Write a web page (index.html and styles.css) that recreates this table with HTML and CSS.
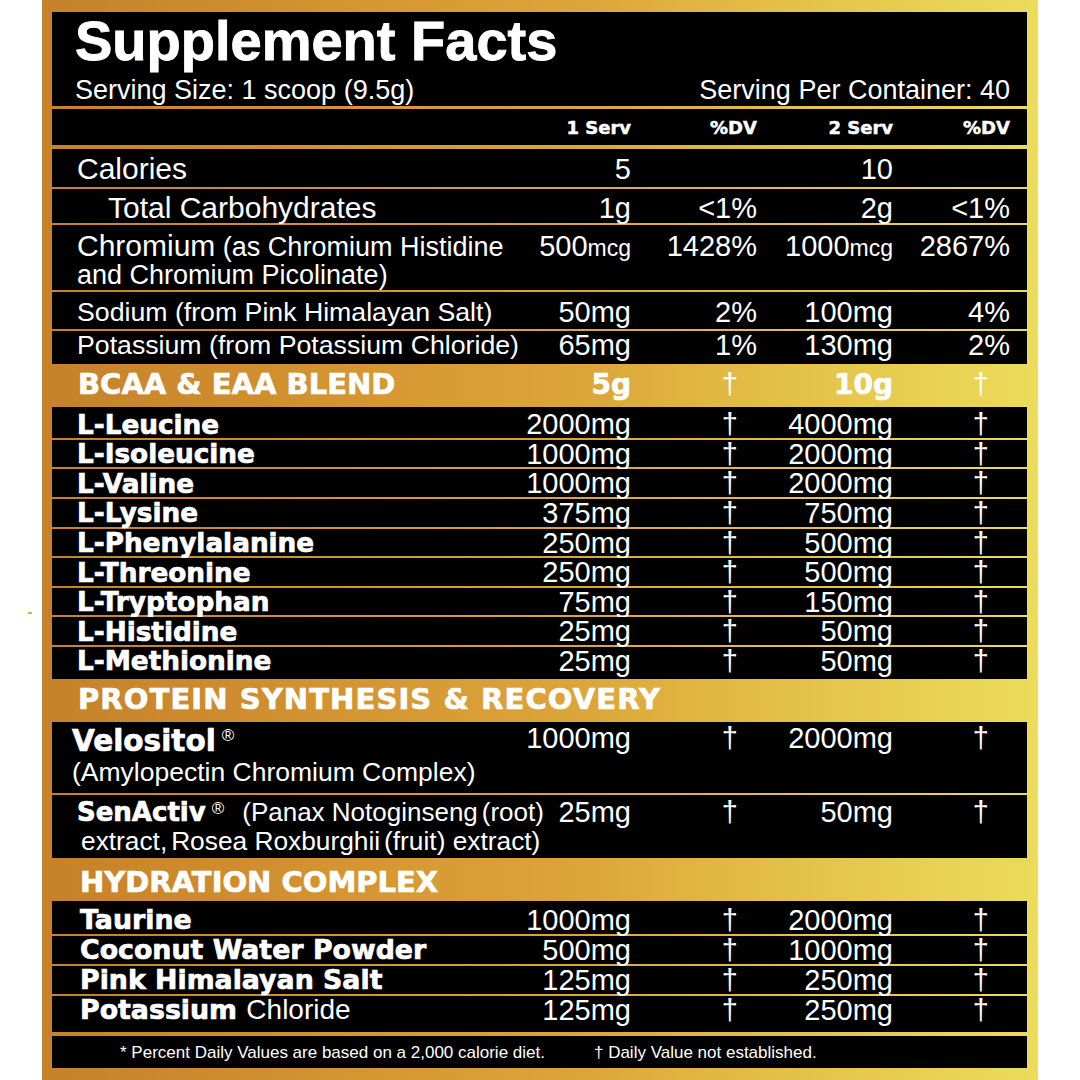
FILE: index.html
```html
<!DOCTYPE html>
<html lang="en">
<head>
<meta charset="utf-8">
<title>Supplement Facts</title>
<link rel="stylesheet" href="styles.css">
</head>
<body>
<span class="speck"></span>
<div class="frame">
  <div class="panel">
    <header class="blk head">
      <h1 class="title">Supplement Facts</h1>
      <div class="serving"><span>Serving Size: 1 scoop (9.5g)</span><span>Serving Per Container: 40</span></div>
    </header>

    <div class="blk row colhead">
      <span></span><span class="v">1 Serv</span><span class="v">%DV</span><span class="v">2 Serv</span><span class="v">%DV</span>
    </div>

    <div class="blk row r-cal">
      <span class="lbl big">Calories</span><span class="v">5</span><span class="v"></span><span class="v">10</span><span class="v"></span>
    </div>

    <div class="blk row r-carb">
      <span class="lbl big indent">Total Carbohydrates</span><span class="v">1g</span><span class="v">&lt;1%</span><span class="v">2g</span><span class="v">&lt;1%</span>
    </div>

    <div class="blk row r-chrom">
      <span class="lbl two"><span class="big">Chromium</span> (as Chromium Histidine<br>and Chromium Picolinate)</span>
      <span class="v">500<small>mcg</small></span><span class="v">1428%</span><span class="v">1000<small>mcg</small></span><span class="v">2867%</span>
    </div>

    <div class="blk row r-sod">
      <span class="lbl">Sodium (from Pink Himalayan Salt)</span><span class="v">50mg</span><span class="v">2%</span><span class="v">100mg</span><span class="v">4%</span>
    </div>

    <div class="blk row r-pot">
      <span class="lbl">Potassium (from Potassium Chloride)</span><span class="v">65mg</span><span class="v">1%</span><span class="v">130mg</span><span class="v">2%</span>
    </div>

    <div class="row sec s-bcaa">
      <span class="sec-title">BCAA &amp; EAA BLEND</span><span class="v heavy">5g</span><span class="v dg">†</span><span class="v heavy">10g</span><span class="v dg">†</span>
    </div>

    <div class="group amino">
      <div class="blk row arow"><span class="alb">L-Leucine</span><span class="v">2000mg</span><span class="v dg">†</span><span class="v">4000mg</span><span class="v dg">†</span></div>
      <div class="blk row arow"><span class="alb">L-Isoleucine</span><span class="v">1000mg</span><span class="v dg">†</span><span class="v">2000mg</span><span class="v dg">†</span></div>
      <div class="blk row arow"><span class="alb">L-Valine</span><span class="v">1000mg</span><span class="v dg">†</span><span class="v">2000mg</span><span class="v dg">†</span></div>
      <div class="blk row arow"><span class="alb">L-Lysine</span><span class="v">375mg</span><span class="v dg">†</span><span class="v">750mg</span><span class="v dg">†</span></div>
      <div class="blk row arow"><span class="alb">L-Phenylalanine</span><span class="v">250mg</span><span class="v dg">†</span><span class="v">500mg</span><span class="v dg">†</span></div>
      <div class="blk row arow"><span class="alb">L-Threonine</span><span class="v">250mg</span><span class="v dg">†</span><span class="v">500mg</span><span class="v dg">†</span></div>
      <div class="blk row arow"><span class="alb">L-Tryptophan</span><span class="v">75mg</span><span class="v dg">†</span><span class="v">150mg</span><span class="v dg">†</span></div>
      <div class="blk row arow"><span class="alb">L-Histidine</span><span class="v">25mg</span><span class="v dg">†</span><span class="v">50mg</span><span class="v dg">†</span></div>
      <div class="blk row arow"><span class="alb">L-Methionine</span><span class="v">25mg</span><span class="v dg">†</span><span class="v">50mg</span><span class="v dg">†</span></div>
    </div>

    <div class="row sec s-prot">
      <span class="sec-title wide">PROTEIN SYNTHESIS &amp; RECOVERY</span>
    </div>

    <div class="blk row r-velo">
      <span class="lbl two velo"><span class="alb-in">Velositol</span><sup class="reg">®</sup><br>(Amylopectin Chromium Complex)</span>
      <span class="v">1000mg</span><span class="v dg">†</span><span class="v">2000mg</span><span class="v dg">†</span>
    </div>

    <div class="blk row r-sen">
      <span class="lbl two sen">
        <span class="ln"><span class="alb-in sm">SenActiv</span><sup class="reg">®</sup>(Panax Notoginseng<span class="thin"> </span>(root)</span>
        <span class="ln l2">extract,<span class="thin"> </span>Rosea Roxburghii<span class="thin"> </span>(fruit) extract)</span>
      </span>
      <span class="v">25mg</span><span class="v dg">†</span><span class="v">50mg</span><span class="v dg">†</span>
    </div>

    <div class="row sec s-hyd">
      <span class="sec-title hyd">HYDRATION COMPLEX</span>
    </div>

    <div class="group hydra">
      <div class="blk row hrow h1"><span class="hlb">Taurine</span><span class="v">1000mg</span><span class="v dg">†</span><span class="v">2000mg</span><span class="v dg">†</span></div>
      <div class="blk row hrow h2"><span class="hlb">Coconut Water Powder</span><span class="v">500mg</span><span class="v dg">†</span><span class="v">1000mg</span><span class="v dg">†</span></div>
      <div class="blk row hrow h3"><span class="hlb">Pink Himalayan Salt</span><span class="v">125mg</span><span class="v dg">†</span><span class="v">250mg</span><span class="v dg">†</span></div>
      <div class="blk row hrow h4"><span class="hlb">Potassium <span class="reg-word">Chloride</span></span><span class="v">125mg</span><span class="v dg">†</span><span class="v">250mg</span><span class="v dg">†</span></div>
    </div>

    <footer class="blk foot">
      <span>* Percent Daily Values are based on a 2,000 calorie diet.</span>
      <span>† Daily Value not established.</span>
    </footer>
  </div>
</div>
</body>
</html>
```

FILE: styles.css
```css
html, body {
  margin: 0;
  padding: 0;
}
body {
  width: 1080px;
  height: 1080px;
  overflow: hidden;
  background: #ffffff;
  position: relative;
  font-family: "Liberation Sans", Arial, Helvetica, sans-serif;
}
.speck {
  position: absolute;
  left: 28px;
  top: 612px;
  width: 4px;
  height: 2px;
  background: #d9b43c;
}
.frame {
  margin-left: 42px;
  width: 996px;
  height: 1080px;
  box-sizing: border-box;
  padding: 12px 11px 0 10px;
  background: linear-gradient(90deg, #c6812a 0%, #ce8c2e 18%, #d69833 35%, #dca63a 55%, #e3bd46 72%, #e8cf52 88%, #ecdc5a 100%);
}
.panel {
  display: flex;
  flex-direction: column;
  color: #ffffff;
}
.blk { background: #000000; }

/* header */
.head {
  height: 94px;
  box-sizing: border-box;
  padding: 1px 17px 0 23px;
}
.title {
  margin: 0;
  font-size: 56px;
  line-height: 56px;
  font-weight: 700;
  -webkit-text-stroke: 0.9px #ffffff;
}
.serving {
  margin-top: 7.5px;
  display: flex;
  justify-content: space-between;
  font-size: 27px;
  line-height: 27px;
}

/* generic row grid */
.row {
  display: grid;
  grid-template-columns: 459px 120px 126px 136px 117px;
  padding-right: 17px;
  box-sizing: border-box;
  align-items: center;
  line-height: 1;
}
.row > * { white-space: nowrap; }
.lbl {
  padding-left: 25px;
  font-size: 26.7px;
}
.big { font-size: 30px; }
.indent { padding-left: 56px; }
.v {
  text-align: right;
  font-size: 29px;
}
.v small { font-size: 23px; }
.dg { padding-right: 19px; }
.v.dg:last-child { padding-right: 21px; }

/* heavy face */
.colhead .v,
.sec-title,
.heavy,
.alb,
.alb-in,
.hlb {
  font-family: "DejaVu Sans", "Liberation Sans", sans-serif;
  font-weight: 700;
  -webkit-text-stroke: 0.7px #ffffff;
}

.colhead {
  margin-top: 3px;
  height: 36px;
  padding-top: 1px;
}
.colhead .v {
  font-size: 18px;
  -webkit-text-stroke: 0.5px #ffffff;
}
.r-cal { margin-top: 4px; height: 38px; padding-top: 2px; }
.r-carb { margin-top: 2px; height: 34px; padding-top: 4px; }
.r-chrom {
  margin-top: 2px;
  height: 65px;
  align-items: start;
  padding-top: 7px;
  line-height: 28px;
}
.r-chrom .lbl { font-size: 27px; line-height: 28px; }
.r-chrom .big { font-size: 30px; }
.r-chrom .v { line-height: 28px; }
.r-sod { margin-top: 2px; height: 37px; padding-top: 3px; }
.r-pot { margin-top: 2px; height: 33px; padding-bottom: 5px; }

/* section headers */
.sec { height: 43px; }
.sec-title {
  padding-left: 26px;
  font-size: 29px;
}
.sec-title.wide {
  grid-column: 1 / -1;
  letter-spacing: 1.1px;
}
.sec-title.hyd { padding-left: 28px; }
.heavy { font-size: 28px; }
.s-bcaa { padding-bottom: 2px; }
.s-prot { padding-bottom: 1px; }
.s-hyd { padding-top: 6px; }

/* amino group */
.group {
  display: flex;
  flex-direction: column;
  gap: 2px;
}
.arow { height: 27.6px; }
.arow:first-child { height: 30.8px; padding-top: 3.2px; }
.arow:last-child { height: 32px; padding-bottom: 4.4px; }
.alb {
  padding-left: 25px;
  font-size: 26.3px;
}

/* protein synthesis rows */
.r-velo {
  height: 71px;
  align-items: start;
  padding-top: 4px;
  line-height: 30px;
}
.r-velo .lbl { padding-left: 20px; font-size: 26.5px; line-height: 30px; }
.r-velo .v { line-height: 30px; margin-top: -3px; }
.alb-in { font-size: 29.5px; }
.alb-in.sm { font-size: 26px; }
.reg {
  font-size: 17px;
  vertical-align: top;
  line-height: 20px;
  margin-left: 6px;
}
.r-sen {
  margin-top: 2px;
  height: 63px;
  align-items: start;
  padding-top: 4.5px;
  line-height: 26px;
}
.r-sen .lbl {
  display: flex;
  flex-direction: column;
  font-size: 26px;
  line-height: 26px;
}
.ln { display: block; }
.r-sen .reg { margin-right: 18px; }
.r-sen .v { line-height: 26px; }
.thin { font-size: 14px; }
.l2 {
  padding-left: 4px;
  font-size: 26.3px;
  line-height: 24px;
}

/* hydration */
.hlb {
  padding-left: 28px;
  font-size: 26.8px;
}
.reg-word {
  font-family: "Liberation Sans", Arial, sans-serif;
  font-weight: 400;
  font-size: 28px;
  -webkit-text-stroke: 0;
}
.h1 { height: 33px; padding-top: 5px; }
.h2 { height: 28px; }
.h3 { height: 28px; }
.h4 { height: 36px; padding-bottom: 8px; }

/* footnote */
.foot {
  margin-top: 4px;
  height: 32px;
  box-sizing: border-box;
  padding: 2px 0 0 68px;
  display: flex;
  align-items: center;
  gap: 49px;
  font-size: 17px;
  line-height: 1;
}
```
